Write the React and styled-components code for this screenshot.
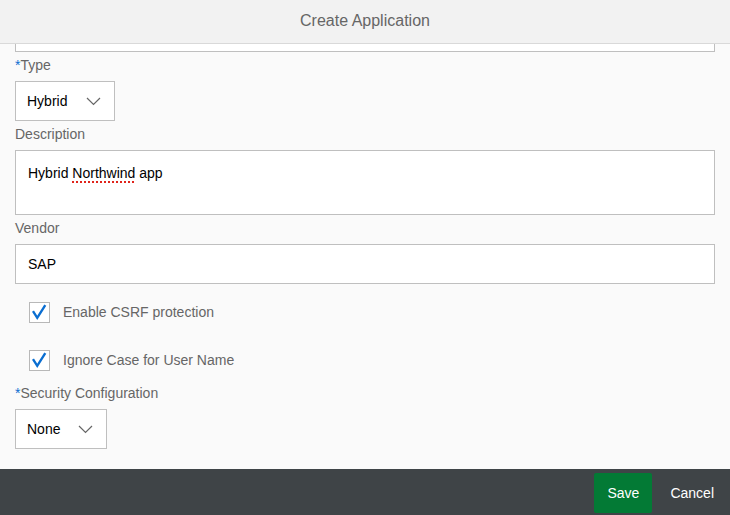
import React from 'react'
import styled, { createGlobalStyle } from 'styled-components'

const GlobalStyle = createGlobalStyle`
  html, body {
    margin: 0;
    padding: 0;
    background: #fafafa;
  }
  body {
    font-family: "Liberation Sans", Arial, Helvetica, sans-serif;
    font-size: 14px;
  }
`

function Chevron() {
  return (
    <svg width="15" height="9" viewBox="0 0 15 9" fill="none">
      <polyline points="1,1 7.5,7.5 14,1" stroke="#666" strokeWidth="1.2" />
    </svg>
  )
}

function Check() {
  return (
    <svg width="21" height="21" viewBox="0 0 21 21" fill="none">
      <path d="M4 10 L8 16.4 L16.2 3.4" stroke="#0a6ed1" strokeWidth="2.6" strokeLinecap="square" strokeLinejoin="miter" />
    </svg>
  )
}

function App() {
  return (
    <Dialog>
      <GlobalStyle />
      <Header>
        <Title>Create Application</Title>
      </Header>
      <Content>
        <ClippedInput />
        <Label><Req>*</Req>Type</Label>
        <Select width={100}>
          <span>Hybrid</span>
          <Chevron />
        </Select>
        <Label>Description</Label>
        <TextArea>
          Hybrid <Misspelled>Northwind</Misspelled> app
        </TextArea>
        <Label>Vendor</Label>
        <Input>SAP</Input>
        <CheckGroup>
          <CheckRow>
            <Box><Check /></Box>
            <CheckText>Enable CSRF protection</CheckText>
          </CheckRow>
          <CheckRow>
            <Box><Check /></Box>
            <CheckText>Ignore Case for User Name</CheckText>
          </CheckRow>
        </CheckGroup>
        <Label flush><Req>*</Req>Security Configuration</Label>
        <Select width={92}>
          <span>None</span>
          <Chevron />
        </Select>
      </Content>
      <Footer>
        <Button primary>Save</Button>
        <Button>Cancel</Button>
      </Footer>
    </Dialog>
  )
}

const Dialog = styled.div`
  width: 730px;
  height: 515px;
  display: flex;
  flex-direction: column;
  overflow: hidden;
  background: #fafafa;
`
const Header = styled.div`
  height: 43px;
  flex: none;
  background: #f2f2f2;
  border-bottom: 1px solid #d9d9d9;
  display: flex;
  align-items: center;
  justify-content: center;
`
const Title = styled.h1`
  margin: 0;
  font-size: 16px;
  font-weight: normal;
  color: #666;
  padding-bottom: 1px;
`
const Content = styled.div`
  flex: 1;
  padding: 0 15px;
  overflow: hidden;
  display: flex;
  flex-direction: column;
  align-items: flex-start;
`
const ClippedInput = styled.div`
  width: 100%;
  box-sizing: border-box;
  height: 8px;
  background: #fff;
  border: 1px solid #bfbfbf;
  border-top: none;
`
const Label = styled.label`
  display: block;
  margin: ${p => (p.flush ? '0' : '4px')} 0 7px;
  line-height: 18px;
  font-size: 14px;
  color: #666;
`
const Req = styled.span`
  color: #0a6ed1;
`
const Select = styled.div`
  box-sizing: border-box;
  width: ${p => p.width}px;
  height: 40px;
  background: #fff;
  border: 1px solid #bfbfbf;
  display: flex;
  align-items: center;
  justify-content: space-between;
  padding: 0 13px 0 11px;
  color: #000;
  font-size: 14px;
  svg {
    margin-top: 1px;
  }
`
const TextArea = styled.div`
  box-sizing: border-box;
  width: 100%;
  height: 65px;
  background: #fff;
  border: 1px solid #bfbfbf;
  padding: 12px 12px;
  line-height: 20px;
  color: #000;
`
const Misspelled = styled.span`
  text-decoration: underline dotted #e0241b;
  text-decoration-thickness: 2px;
  text-underline-offset: 3px;
`
const Input = styled.div`
  box-sizing: border-box;
  width: 100%;
  height: 40px;
  background: #fff;
  border: 1px solid #bfbfbf;
  padding: 0 12px;
  display: flex;
  align-items: center;
  color: #000;
`
const CheckGroup = styled.div`
  margin-top: 4px;
  display: flex;
  flex-direction: column;
`
const CheckRow = styled.div`
  height: 48px;
  display: flex;
  align-items: center;
  padding-left: 14px;
  gap: 13px;
`
const Box = styled.div`
  box-sizing: border-box;
  width: 21px;
  height: 21px;
  background: #fff;
  border: 1.5px solid #b8b8b8;
  display: flex;
  align-items: center;
  justify-content: center;
`
const CheckText = styled.span`
  color: #666;
  font-size: 14px;
`
const Footer = styled.div`
  height: 46px;
  flex: none;
  background: #3f4447;
  display: flex;
  align-items: center;
  justify-content: flex-end;
  gap: 5px;
  padding-right: 3px;
`
const Button = styled.button`
  height: 40px;
  padding: 0 13px;
  border: none;
  border-radius: 2px;
  font-family: inherit;
  font-size: 14px;
  color: #fff;
  background: ${p => (p.primary ? '#037a35' : 'transparent')};
  margin-top: 2px;
  cursor: pointer;
`

export default App
